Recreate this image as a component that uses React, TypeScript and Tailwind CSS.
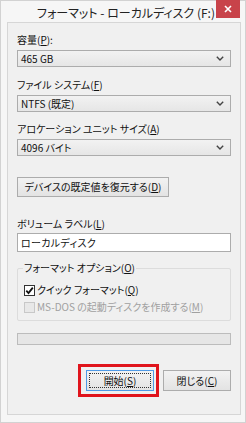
import React from "react";

const U = ({ c }: { c: string }) => <span className="underline underline-offset-1">{c}</span>;

const Chevron = () => (
  <svg width="8" height="5" viewBox="0 0 8 5" className="shrink-0">
    <path d="M0.8 0.8 L4 4 L7.2 0.8" fill="none" stroke="#444" strokeWidth="1.4" />
  </svg>
);

const Combo = ({ text }: { text: string }) => (
  <div className="mx-[9px] h-[17px] flex items-center justify-between pl-[3px] pr-[6px] border border-[#acacac] bg-gradient-to-b from-[#f2f2f2] to-[#e6e6e6] text-[#111]">
    <span>{text}</span>
    <Chevron />
  </div>
);

const Btn = ({ children, focused, className }: { children: React.ReactNode; focused?: boolean; className?: string }) => (
  <div
    className={
      "h-[21px] flex items-center justify-center border bg-gradient-to-b from-[#f2f2f2] to-[#e3e3e3] text-[#111] " +
      (focused ? "border-[#4f9ae6] p-[2px] " : "border-[#acacac] ") +
      (className ?? "")
    }
  >
    {focused ? (
      <div className="w-full h-full flex items-center justify-center border border-dotted border-[#333]">{children}</div>
    ) : (
      children
    )}
  </div>
);

export default function App() {
  return (
    <div className="w-[246px] h-[423px] bg-[#f6f6f6] border border-[#d2d2d2] flex flex-col font-['Meiryo_UI','Noto_Sans_CJK_JP',sans-serif] text-[10px] leading-[12px] [font-feature-settings:'palt'] text-[#111]">
      {/* title bar */}
      <div className="relative h-[21px] flex items-center justify-center shrink-0">
        <span className="text-[12px] text-[#222] ml-[6px] mt-[3px]">フォーマット - ローカルディスク (F:)</span>
        <div className="absolute top-[-1px] right-[5px] w-[24px] h-[18px] bg-[#c8434a] flex items-center justify-center">
          <svg width="8" height="8" viewBox="0 0 8 8">
            <path d="M1 1 L7 7 M7 1 L1 7" stroke="#fff" strokeWidth="1.6" />
          </svg>
        </div>
      </div>
      {/* client area */}
      <div className="ml-[6px] mr-[4px] mb-[7px] flex-1 bg-[#f0f0f0] border border-[#d6d6d6] flex flex-col">
        <div className="pl-[9px] mt-[11px] h-[12px]">容量(<U c="P" />):</div>
        <div className="mt-[4px]"><Combo text="465 GB" /></div>

        <div className="pl-[9px] mt-[12px] h-[12px]">ファイル システム(<U c="F" />)</div>
        <div className="mt-[4px]"><Combo text="NTFS (既定)" /></div>

        <div className="pl-[9px] mt-[11px] h-[12px]">アロケーション ユニット サイズ(<U c="A" />)</div>
        <div className="mt-[4px]"><Combo text="4096 バイト" /></div>

        <div className="ml-[9px] mt-[21px] w-[152px] h-[20px] flex items-center justify-center border border-[#acacac] bg-gradient-to-b from-[#f2f2f2] to-[#e3e3e3]">
          デバイスの既定値を復元する(<U c="D" />)
        </div>

        <div className="pl-[9px] mt-[21px] h-[12px]">ボリューム ラベル(<U c="L" />)</div>
        <div className="mx-[9px] mt-[3px] h-[19px] flex items-center pl-[3px] bg-white border border-[#acacac] tracking-[0.3px]">ローカルディスク</div>

        {/* group box */}
        <div className="relative mx-[9px] mt-[16px] h-[53px] border border-[#dcdcdc] rounded-[2px] flex flex-col">
          <div className="absolute -top-[7px] left-[5px] px-[1px] bg-[#f0f0f0] h-[12px]">フォーマット オプション(<U c="O" />)</div>
          <div className="mt-[15px] ml-[6px] flex items-center gap-[2px] h-[12px]">
            <div className="w-[11px] h-[11px] border border-[#333] bg-white flex items-center justify-center">
              <svg width="9" height="9" viewBox="0 0 9 9">
                <path d="M1.3 4.6 L3.5 7 L7.8 1.6" fill="none" stroke="#111" strokeWidth="1.8" />
              </svg>
            </div>
            <span>クイック フォーマット(<U c="Q" />)</span>
          </div>
          <div className="mt-[5px] ml-[6px] flex items-center gap-[2px] h-[12px] text-[#a0a0a0]">
            <div className="w-[11px] h-[11px] border border-[#c8c8c8] bg-[#e8e8e8]" />
            <span>MS-DOS の起動ディスクを作成する(<U c="M" />)</span>
          </div>
        </div>

        {/* progress */}
        <div className="mx-[9px] mt-[12px] h-[12px] bg-[#e6e6e6] border border-[#bcbcbc]" />

        {/* buttons */}
        <div className="mt-[25px] flex justify-end gap-[9px] mr-[9px]">
          <div className="relative">
            <Btn focused className="w-[68px]">開始(<U c="S" />)</Btn>
            <div className="absolute -left-[8px] -top-[6px] -right-[5px] -bottom-[6px] border-[3px] border-[#e0141c] pointer-events-none" />
          </div>
          <Btn className="w-[68px]">閉じる(<U c="C" />)</Btn>
        </div>
      </div>
    </div>
  );
}
